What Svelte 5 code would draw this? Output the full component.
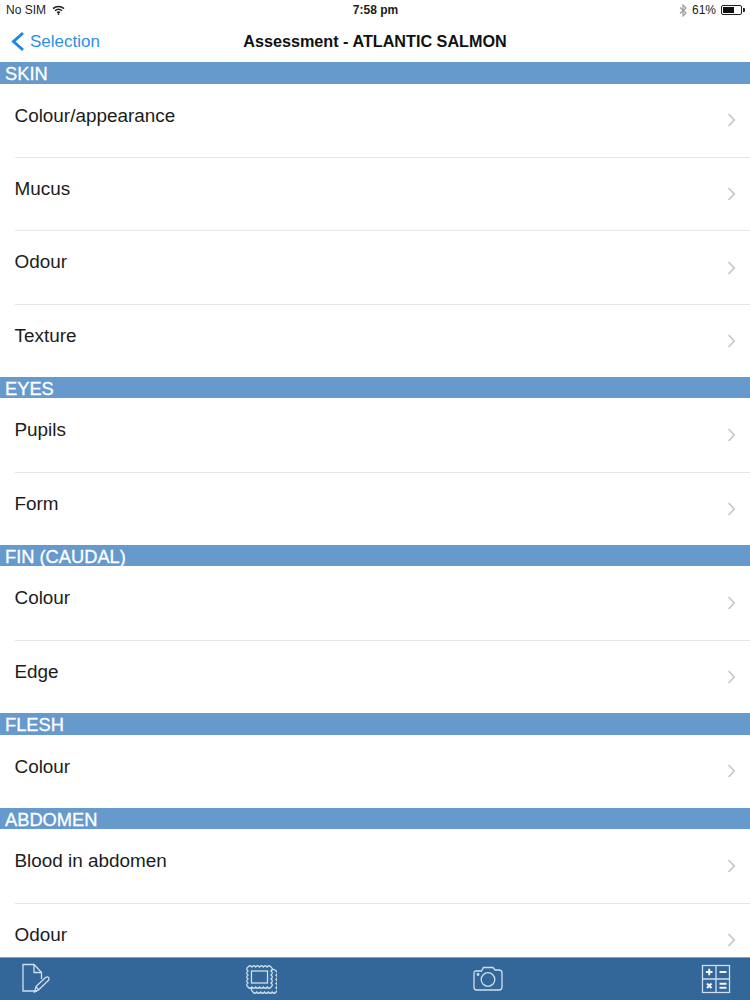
<script lang="ts">
	// sections of the assessment list, in screen order
	const sections = [
		{ title: 'SKIN', rows: ['Colour/appearance', 'Mucus', 'Odour', 'Texture'] },
		{ title: 'EYES', rows: ['Pupils', 'Form'] },
		{ title: 'FIN (CAUDAL)', rows: ['Colour', 'Edge'] },
		{ title: 'FLESH', rows: ['Colour'] },
		{ title: 'ABDOMEN', rows: ['Blood in abdomen', 'Odour'] }
	];

	// stamp-like edge for the photo frames: little bumps along a polyline
	function scallop(points: number[][], step = 4, bump = 1.3) {
		let d = `M${points[0][0]} ${points[0][1]}`;
		for (let p = 1; p < points.length; p++) {
			const [x0, y0] = points[p - 1];
			const [x1, y1] = points[p];
			const len = Math.hypot(x1 - x0, y1 - y0);
			const n = Math.round(len / step);
			const ux = (x1 - x0) / n;
			const uy = (y1 - y0) / n;
			for (let i = 0; i < n; i++) {
				// normal points outward for a clockwise outline
				const cx = x0 + ux * (i + 0.5) + (uy / step) * bump * 2;
				const cy = y0 + uy * (i + 0.5) - (ux / step) * bump * 2;
				d += ` Q${cx.toFixed(2)} ${cy.toFixed(2)} ${(x0 + ux * (i + 1)).toFixed(2)} ${(y0 + uy * (i + 1)).toFixed(2)}`;
			}
		}
		return d;
	}

	const frontFrame = scallop([[3, 4], [26, 4], [26, 24], [3, 24], [3, 4]]) + ' Z';
	const backFrame = scallop([[26, 8], [31, 8], [31, 29], [8, 29], [8, 24]]);
</script>

<div class="screen">
	<div class="status">
		<div class="status-left">
			<span>No SIM</span>
			<svg class="wifi" width="13" height="10" viewBox="0 0 13 10" aria-hidden="true">
				<path d="M1 3.6 A8 8 0 0 1 12 3.6" />
				<path d="M3 5.7 A5.2 5.2 0 0 1 10 5.7" />
				<path d="M5 7.6 A2.5 2.5 0 0 1 8 7.6" />
				<circle cx="6.5" cy="9" r="0.9" />
			</svg>
		</div>
		<span class="clock">7:58 pm</span>
		<div class="status-right">
			<svg class="bt" width="8" height="13" viewBox="0 0 8 13" aria-hidden="true">
				<path d="M1 3.5 L7 9 L4 12 V1 L7 4 L1 9.5" />
			</svg>
			<span>61%</span>
			<div class="battery"><div class="battery-fill"></div></div>
		</div>
	</div>

	<header class="nav">
		<div class="back">
			<svg width="14" height="21" viewBox="0 0 14 21" aria-hidden="true">
				<path d="M12 2 L2.500 10.500 L12 19" />
			</svg>
			<span>Selection</span>
		</div>
		<h1>Assessment - ATLANTIC SALMON</h1>
	</header>

	<main class="list">
		{#each sections as section}
			<h2 class="section-title">{section.title}</h2>
			{#each section.rows as row, i}
				<div class="row" class:first={i === 0}>
					<span class="row-label">{row}</span>
					<svg class="chevron" width="9" height="14" viewBox="0 0 9 14" aria-hidden="true">
						<path d="M1.500 1 L7.200 7 L1.500 13" />
					</svg>
				</div>
			{/each}
		{/each}
	</main>

	<nav class="tabbar">
		<svg class="tab-icon doc" width="32" height="32" viewBox="0 0 32 32" aria-hidden="true">
			<path d="M17 28 H3 V1.500 H14 L21.500 9.500 V16" />
			<path d="M14 1.500 V9.500 H21.500" />
			<path d="M14.500 29 L16 23.500 L25.500 14.500 Q27.500 13.200 28.800 14.800 Q29.500 16.500 28 17.800 L18.500 27 Z" />
			<path d="M16 23.500 L18.500 27" />
		</svg>
		<svg class="tab-icon" width="32" height="32" viewBox="0 0 32 32" aria-hidden="true">
			<path d={frontFrame} />
			<rect x="6.500" y="8" width="16" height="12" />
			<path d={backFrame} />
		</svg>
		<svg class="tab-icon" width="32" height="32" viewBox="0 0 32 32" aria-hidden="true">
			<path d="M3.500 8 H9.500 L11.500 4.500 H21 L23 7 H27 Q30 7 30 10 V24 Q30 27 27 27 H4.500 Q2 27 2 24 V10 Q2 8 3.500 8 Z" />
			<circle cx="16" cy="16.500" r="6.800" />
			<circle cx="6" cy="11.500" r="0.800" />
		</svg>
		<svg class="tab-icon calc" width="30" height="30" viewBox="0 0 30 30" aria-hidden="true">
			<rect x="1.500" y="1.500" width="27" height="27" />
			<path d="M15 1.500 V28.500 M1.500 15 H28.500" />
			<path class="sym" d="M8.200 4.700 V11.300 M4.900 8 H11.500 M18.500 8 H25.500 M6 19.500 L10.500 24 M10.500 19.500 L6 24 M18.500 19.800 H25.500 M18.500 23.800 H25.500" />
		</svg>
	</nav>
</div>

<style>
	:global(body) {
		margin: 0;
		background: #fff;
	}

	.screen {
		position: relative;
		width: 750px;
		height: 1000px;
		overflow: hidden;
		font-family: 'Liberation Sans', Arial, sans-serif;
		color: #1c1c1c;
		display: flex;
		flex-direction: column;
	}

	.status {
		height: 20px;
		padding: 0 5px 0 6px;
		display: grid;
		grid-template-columns: 1fr auto 1fr;
		align-items: center;
		font-size: 12px;
		flex: none;
	}

	.status-left {
		display: flex;
		align-items: center;
		gap: 6px;
	}

	.wifi path {
		fill: none;
		stroke: #222;
		stroke-width: 1.500;
	}

	.wifi circle {
		fill: #222;
	}

	.clock {
		font-weight: bold;
	}

	.status-right {
		display: flex;
		justify-content: flex-end;
		align-items: center;
		gap: 5px;
	}

	.bt path {
		fill: none;
		stroke: #999;
		stroke-width: 1.100;
	}

	.battery {
		position: relative;
		width: 17px;
		height: 6px;
		border: 1px solid #222;
		border-radius: 2px;
		margin-right: 3px;
		padding: 1px;
		box-sizing: content-box;
	}

	.battery::after {
		content: '';
		position: absolute;
		right: -4px;
		top: 2px;
		width: 2px;
		height: 4px;
		background: #222;
		border-radius: 0 1px 1px 0;
	}

	.battery-fill {
		width: 65%;
		height: 100%;
		background: #111;
	}

	.nav {
		position: relative;
		height: 42.200px;
		flex: none;
		display: flex;
		align-items: center;
		justify-content: center;
	}

	.nav h1 {
		margin: 0;
		font-size: 16.200px;
		font-weight: bold;
		color: #111;
	}

	.back {
		position: absolute;
		left: 11px;
		top: 11px;
		display: flex;
		align-items: center;
		gap: 5px;
		color: #2f8fe8;
		font-size: 17px;
	}

	.back svg path {
		fill: none;
		stroke: #1f86ea;
		stroke-width: 3;
	}

	.list {
		flex: 1;
		min-height: 0;
		overflow: hidden;
	}

	.section-title {
		margin: 0;
		height: 21.500px;
		line-height: 23px;
		padding-left: 5px;
		background: #6699cc;
		color: #fff;
		font-size: 18.300px;
		font-weight: normal;
		-webkit-text-stroke: 0.3px #fff;
	}

	.row {
		position: relative;
		height: 73.300px;
		box-sizing: border-box;
		margin-left: 15px;
		padding-top: 20px;
		border-top: 1px solid #e6e6e6;
	}

	.row.first {
		border-top: none;
		padding-top: 21px;
	}

	.row-label {
		font-size: 18.900px;
		line-height: 22px;
		display: block;
		margin-left: -0.500px;
	}

	.chevron {
		position: absolute;
		right: 14px;
		top: 29.500px;
	}

	.chevron path {
		fill: none;
		stroke: #c8c8cc;
		stroke-width: 1.800;
	}

	.tabbar {
		flex: none;
		height: 43px;
		background: #336699;
		border-top: 1px solid #7f9fc0;
		box-sizing: border-box;
		display: flex;
		align-items: center;
		justify-content: space-between;
		padding: 0 19px 0 20px;
	}

	/* nudges the two middle icons left without moving the outer ones */
	.doc {
		margin-right: -2px;
	}

	.calc {
		margin-left: 2px;
	}

	.tab-icon path,
	.tab-icon rect,
	.tab-icon circle {
		fill: none;
		stroke: #cfdfee;
		stroke-width: 1.300;
	}

	.calc .sym {
		stroke: #f2f6fa;
		stroke-width: 2;
	}
</style>
